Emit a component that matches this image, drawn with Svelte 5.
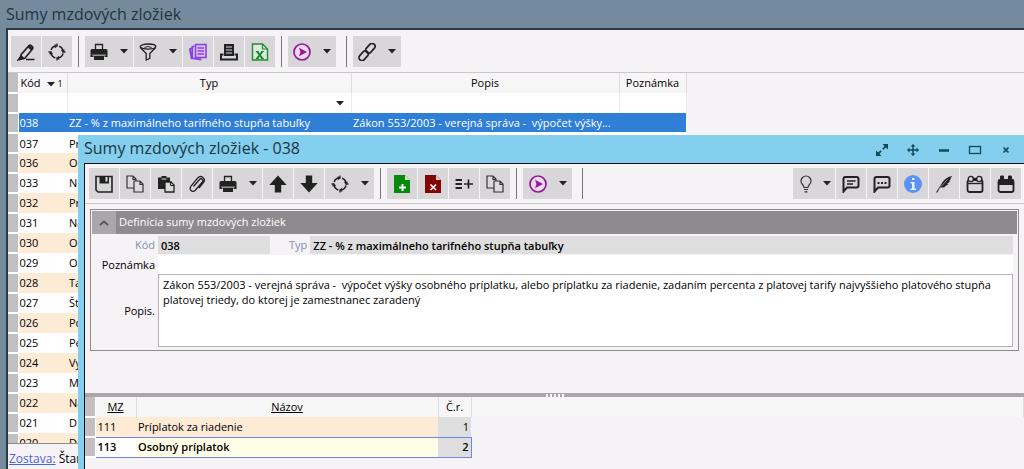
<script>
  const icons = {
    pencil: `<path d="M3 16.5 4.2 11.5 12 2.6q1-1 2.2 0l1.3 1.2q1 1 0 2.1L7.8 15.2Z" fill="none" stroke="#222" stroke-width="1.6"/><path d="M3 16.5 4 12l3.6 3.2ZM10.5 4.2l3.8 3.4 1.7-2-3.6-3.6Z" fill="#222"/><path d="M1 17 4 13l2 2ZM9 16.5h8.5" fill="#222" stroke="#222" stroke-width="1.3"/>`,
    target: `<circle cx="9" cy="9" r="6.2" fill="none" stroke="#222" stroke-width="1.500" stroke-dasharray="6.700 3.040" stroke-dashoffset="-1.500"/><path d="M9 .5v3M9 14.500v3M.5 9h3M14.500 9h3" stroke="#222" stroke-width="1.300"/><path d="m6.800 1 3 2-3 2.200ZM11.200 17l-3-2 3-2.200ZM17 6.800l-2 3-2.200-3ZM1 11.200l2-3 2.200 3Z" fill="#222"/>`,
    printer: `<path d="M5.5 6V1.5h7V6" fill="none" stroke="#222" stroke-width="1.3"/><path d="M2 6h14q1.500 0 1.500 1.500V14h-3v-2h-11v2H0.500V7.500Q0.500 6 2 6Z" fill="#222"/><path d="M4 12.500h10v4.500H4Z" fill="#222"/><path d="M2 12h14" stroke="#bbb" stroke-width=".8"/>`,
    filter: `<ellipse cx="9" cy="3.600" rx="7.800" ry="2.600" fill="none" stroke="#222" stroke-width="1.300"/><path d="M1.300 4.500 7.200 10.500v6.500l3.600-1.600v-4.900l5.900-6" fill="none" stroke="#222" stroke-width="1.300"/><path d="M5.500 4.500q3.500-2 7 0" fill="none" stroke="#222"/>`,
    cards: `<path d="M6.500 1.500h10.500v13H6.500Z" fill="#d9bff8" stroke="#8a3fe0" stroke-width="1.600"/><path d="M8.500 5h6.500M8.500 8h6.500M8.500 11h6.500" stroke="#8a3fe0" stroke-width="1.700"/><path d="M5.500 3 3.300 3.800v11.500l9 1.200M3 5 .8 6l1.900 10" fill="none" stroke="#8a3fe0" stroke-width="1.800"/>`,
    tray: `<path d="M4 1h10v12H4Z" fill="#222"/><path d="M6 4h6M6 7h6M6 10h6" stroke="#d8d6d9" stroke-width="1.200"/><path d="M3.500 11.500H1v5h16v-5h-2.500" fill="none" stroke="#222" stroke-width="2"/>`,
    excel: `<path d="M1.500 1h10l5 5v11h-15Z" fill="#dfe8df" stroke="#1c8f2c" stroke-width="1.400"/><path d="M11.500 1v5h5" fill="none" stroke="#1c8f2c" stroke-width="1.200"/><path d="m6 8.500 5.500 7M11.500 8.500 6 15.500" stroke="#128a22" stroke-width="2"/><path d="M4.800 8.500h3M10 8.500h2.800M4.800 15.500h3M10 15.500h2.800" stroke="#128a22"/>`,
    play: `<circle cx="9" cy="9" r="8" fill="#ecd9ef" stroke="#911a96" stroke-width="1.700"/><path d="m6 4.800 8 4.200-8 4.200 1.500-4.200Z" fill="#911a96"/>`,
    link: `<g transform="rotate(-48 9 9)" fill="none" stroke="#222" stroke-width="1.700"><rect x="-1.500" y="6" width="11" height="6" rx="3"/><rect x="8.500" y="6" width="11" height="6" rx="3"/></g>`,
    save: `<path d="M1 1.500h16v15.500H3L1 15Z" fill="none" stroke="#222" stroke-width="1.600"/><path d="M4.500 1h9.500v7.500H4.500Z" fill="#222"/><path d="M10.500 2h2v4.500h-2Z" fill="#ddd"/>`,
    copy: `<path d="M1 1h6l3 3v9H1ZM7 1v3.500h3" fill="#dcdadd" stroke="#333" stroke-width="1.200"/><path d="M8 6h6l3 3v8H8ZM14 6v3.500h3" fill="#dcdadd" stroke="#333" stroke-width="1.200"/>`,
    paste: `<path d="M1 2.500h3.500V1h5v1.500H13V14H1Z" fill="#222"/><path d="M4.500 4h5" stroke="#ddd"/><path d="M8 7h6l3 3v7H8Z" fill="#dcdadd" stroke="#222" stroke-width="1.300"/><path d="M13.500 7v3.500H17" fill="none" stroke="#222"/>`,
    clip: `<path d="m5.500 11.500 6-7q1.400-1.400 2.700-.2t.2 2.700l-7.300 8.500q-1.800 1.700-3.800.2t-.6-4L9.500 3.200q2.600-3 5.400-.8t.5 5.300L11 13" fill="none" stroke="#222" stroke-width="1.300"/>`,
    up: `<path d="M9 .5 17.700 10H12.200v7.500H5.800V10H.3Z" fill="#222"/>`,
    down: `<path d="M9 17.500 17.700 8H12.200V.5H5.800V8H.3Z" fill="#222"/>`,
    add: `<path d="M1 0h11l5 5v13H1Z" fill="#068a0c"/><path d="M12 0v5h5" fill="#cfe8cf"/><path d="M9.500 9v7M6 12.500h7" stroke="#fff" stroke-width="2"/>`,
    remove: `<path d="M1 0h11l5 5v13H1Z" fill="#850505"/><path d="M12 0v5h5" fill="#e6caca"/><path d="m6.500 9.500 5.500 5.500M12 9.500 6.500 15" stroke="#fff" stroke-width="1.700"/>`,
    listadd: `<path d="M.5 5h6.500M.5 9h6.500M.5 13h6.500" stroke="#222" stroke-width="2"/><path d="M13.500 4.500v9M9 9h9" stroke="#222" stroke-width="1.700"/>`,
    bulb: `<path d="M7 12.500Q7 11 5.500 9.500 4 8 4 6a5 5 0 0 1 10 0q0 2-1.500 3.500T11 12.500ZM7 14.500h4M7.500 16.800h3" fill="none" stroke="#333" stroke-width="1.200"/>`,
    note: `<path d="M1.500 16.500V4q0-2 2-2h11q2 0 2 2v6.500q0 2-2 2H5Z" fill="none" stroke="#222" stroke-width="2"/><path d="M5 6h8.500M5 9h6" stroke="#222" stroke-width="1.300"/>`,
    dots: `<path d="M1.500 16.500V4q0-2 2-2h11q2 0 2 2v6.500q0 2-2 2H5Z" fill="none" stroke="#222" stroke-width="2"/><path d="M4.500 8h2M8 8h2M11.500 8h2" stroke="#222" stroke-width="2"/>`,
    info: `<circle cx="9" cy="9" r="9" fill="#5b93f5"/><path d="M8 3h2.500v2H8ZM6.500 7h4v6.500H12V15H6.500v-1.500H8V8.500H6.500Z" fill="#e8f0ff"/>`,
    feather: `<path d="M1 17.500 6 9.500Q9 3 17.500.8L15 3.500l1.500-.2-2.500 3 1.500-.2-3.500 3 1.500.1-4 2.300 1.200.2q-3 1.200-5.700.8L2.300 17.500Z" fill="#222"/><path d="m5.500 12 7-7.500" stroke="#bbb" stroke-width=".7"/>`,
    calendar: `<rect x="1.500" y="5" width="15" height="12" rx="2" fill="none" stroke="#222" stroke-width="1.800"/><path d="M2 8.500h14" stroke="#222" stroke-width="1.400"/><circle cx="4.800" cy="4" r="2.600" fill="#dcdadd" stroke="#222" stroke-width="1.400"/><circle cx="13.200" cy="4" r="2.600" fill="#dcdadd" stroke="#222" stroke-width="1.400"/><path d="M7.500 3.500h3" stroke="#222" stroke-width="1.300"/>`,
    planner: `<rect x="1.500" y="5" width="15" height="12" rx="2" fill="none" stroke="#222" stroke-width="1.800"/><path d="M1 4.500h16V10H1ZM3 5V1.500q0-1 1.500-1h1.500q1 0 1 1V5M11 5V1.500q0-1 1-1h1.500q1.500 0 1.500 1V5" fill="#222"/>`,
    expand: `<path d="m3.500 14.500 11-11" stroke="#0f4a58" stroke-width="1.800" stroke-dasharray="6.500 2.500"/><path d="M9.500 3H15v5.500ZM3 9.500V15h5.500Z" fill="#0f4a58"/>`,
    move: `<path d="M9 4v10M4 9h10" stroke="#0f4a58" stroke-width="1.500"/><path d="m9 3 2.500 2.500h-5ZM9 15l2.500-2.500h-5ZM3 9l2.500-2.500v5ZM15 9l-2.500-2.500v5Z" fill="#0f4a58"/>`,
    minimize: `<path d="M4 9.500h10" stroke="#0f4a58" stroke-width="2.500"/>`,
    maximize: `<rect x="3.500" y="5.500" width="11" height="7" fill="none" stroke="#0f4a58" stroke-width="1.300"/>`,
    close: `<path d="m6.500 6.500 5 5M11.500 6.500l-5 5" stroke="#0f4a58" stroke-width="1.700"/>`
  };

  const mainTools = [
    { icon: "pencil", label: "Upraviť" },
    { icon: "target", label: "Obnoviť" },
    { sep: true },
    { icon: "printer", label: "Tlač", menu: true },
    { icon: "filter", label: "Filter", menu: true },
    { icon: "cards", label: "Zostavy" },
    { icon: "tray", label: "Export" },
    { icon: "excel", label: "Excel" },
    { sep: true },
    { icon: "play", label: "Spustiť", menu: true },
    { sep: true, wide: true },
    { icon: "link", label: "Odkazy", menu: true }
  ];

  const detailTools = [
    { icon: "save", label: "Uložiť" },
    { icon: "copy", label: "Kopírovať" },
    { icon: "paste", label: "Vložiť" },
    { icon: "clip", label: "Prílohy" },
    { icon: "printer", label: "Tlač", menu: true },
    { icon: "up", label: "Predchádzajúci" },
    { icon: "down", label: "Nasledujúci" },
    { icon: "target", label: "Obnoviť", menu: true },
    { sep: true },
    { icon: "add", label: "Pridať riadok" },
    { icon: "remove", label: "Zmazať riadok" },
    { icon: "listadd", label: "Pridať viac" },
    { icon: "copy", label: "Kopírovať riadok" },
    { sep: true },
    { icon: "play", label: "Spustiť", menu: true },
    { sep: true, wide: true }
  ];

  const sideTools = [
    { icon: "bulb", label: "Tipy", menu: true, narrow: true },
    { icon: "note", label: "Poznámka" },
    { icon: "dots", label: "Komentáre" },
    { icon: "info", label: "Informácie" },
    { icon: "feather", label: "Podpis" },
    { icon: "calendar", label: "Kalendár" },
    { icon: "planner", label: "Plánovač" }
  ];

  const windowTools = [
    { icon: "expand", label: "Zväčšiť" },
    { icon: "move", label: "Presunúť" },
    { icon: "minimize", label: "Minimalizovať" },
    { icon: "maximize", label: "Maximalizovať" },
    { icon: "close", label: "Zavrieť" }
  ];

  const rows = [
    ["038", "ZZ - % z maximálneho tarifného stupňa tabuľky", "Zákon 553/2003 - verejná správa -  výpočet výšky..."],
    ["037", "Pr"],
    ["036", "O"],
    ["033", "N"],
    ["032", "Pr"],
    ["031", "Na"],
    ["030", "O"],
    ["029", "O"],
    ["028", "Ta"],
    ["027", "Št"],
    ["026", "Po"],
    ["025", "Pe"],
    ["024", "Vy"],
    ["023", "M"],
    ["022", "Na"],
    ["021", "D"],
    ["020", "D"]
  ];

  let selected = $state("038");
  let note = $state("");
  let description = $state(
    "Zákon 553/2003 - verejná správa -  výpočet výšky osobného príplatku, alebo príplatku za riadenie, zadaním percenta z platovej tarify najvyššieho platového stupňa platovej triedy, do ktorej je zamestnanec zaradený"
  );
</script>

{#snippet icon(name)}
  <svg width="18" height="18" viewBox="0 0 18 18" aria-hidden="true">{@html icons[name]}</svg>
{/snippet}

{#snippet caret()}
  <svg class="caret" width="8" height="5" viewBox="0 0 8 5" aria-hidden="true"><path d="M0 0h8L4 4.500Z" fill="#222" /></svg>
{/snippet}

{#snippet toolbar(items)}
  {#each items as item}
    {#if item.sep}
      <span class="sep" class:wide={item.wide}></span>
    {:else}
      <button class="tool" class:menu={item.menu} class:narrow={item.narrow} aria-label={item.label}>
        {@render icon(item.icon)}
        {#if item.menu}{@render caret()}{/if}
      </button>
    {/if}
  {/each}
{/snippet}

<main class="desktop">
  <h1 class="title">Sumy mzdových zložiek</h1>

  <section class="list">
    <div class="toolbar">{@render toolbar(mainTools)}</div>

    <div class="scroll">
      <table class="grid">
        <colgroup>
          <col class="handle-col" /><col class="code-col" /><col class="type-col" /><col class="desc-col" /><col class="note-col" />
        </colgroup>
        <thead>
          <tr>
            <td class="handle"></td>
            <th class="sorted">Kód <span>{@render caret()}<sup>1</sup></span></th>
            <th>Typ</th>
            <th>Popis</th>
            <th>Poznámka</th>
          </tr>
          <tr class="filters">
            <td class="handle"></td>
            <td><input aria-label="Filter kód" /></td>
            <td>
              <div class="pick">
                <select aria-label="Filter typ"><option></option></select>
                {@render caret()}
              </div>
            </td>
            <td><input aria-label="Filter popis" /></td>
            <td><input aria-label="Filter poznámka" /></td>
          </tr>
        </thead>
        <tbody>
          {#each rows as [code, type, desc]}
            <tr class:selected={selected === code} onclick={() => (selected = code)}>
              <td class="handle"></td>
              <td>{code}</td>
              <td>{type}</td>
              <td>{desc}</td>
              <td></td>
            </tr>
          {/each}
        </tbody>
      </table>
    </div>

    <footer><a href="#zostava">Zostava:</a> Štan</footer>
  </section>

  <section class="window">
    <header class="caption">
      <h2 class="title">Sumy mzdových zložiek - 038</h2>
      <div class="controls">
        {#each windowTools as tool}
          <button aria-label={tool.label}>{@render icon(tool.icon)}</button>
        {/each}
      </div>
    </header>

    <div class="body">
      <div class="toolbar">
        {@render toolbar(detailTools)}
        <span class="spacer"></span>
        {@render toolbar(sideTools)}
      </div>

      <div class="panel">
        <div class="panel-head">
          <button aria-label="Zbaliť">
            <svg width="10" height="6" viewBox="0 0 10 6" aria-hidden="true"><path d="m1 5 4-3.500L9 5" fill="none" stroke="#555" stroke-width="1.800" /></svg>
          </button>
          <h3>Definícia sumy mzdových zložiek</h3>
        </div>
        <div class="form">
          <label class="dim" for="kod">Kód</label>
          <div class="line">
            <input class="fixed code" id="kod" value="038" readonly />
            <label class="dim" for="typ">Typ</label>
            <input class="fixed" id="typ" value="ZZ - % z maximálneho tarifného stupňa tabuľky" readonly />
          </div>
          <label for="poznamka">Poznámka</label>
          <input id="poznamka" bind:value={note} />
          <label for="popis">Popis.</label>
          <textarea id="popis" spellcheck="false" bind:value={description}></textarea>
        </div>
      </div>

      <div class="splitter"><i></i><i></i><i></i><i></i><i></i></div>

      <div class="items">
        <table>
          <colgroup>
            <col class="handle-col" /><col class="mz-col" /><col class="name-col" /><col class="order-col" /><col />
          </colgroup>
          <thead>
            <tr>
              <td class="handle"></td>
              <th><u>MZ</u></th>
              <th><u>Názov</u></th>
              <th>Č.r.</th>
              <th></th>
            </tr>
          </thead>
          <tbody>
            <tr>
              <td class="handle"></td>
              <td>111</td>
              <td>Príplatok za riadenie</td>
              <td class="num">1</td>
            </tr>
            <tr class="current">
              <td class="handle"></td>
              <td>113</td>
              <td>Osobný príplatok</td>
              <td class="num">2</td>
            </tr>
          </tbody>
        </table>
      </div>
    </div>
  </section>
</main>

<style>
  :global(body) {
    margin: 0;
  }

  * {
    box-sizing: border-box;
  }

  .desktop {
    position: relative;
    display: flex;
    flex-direction: column;
    height: 100vh;
    overflow: hidden;
    padding-left: 6px;
    background: #748b9e;
    color: #000;
    font-family: "Open Sans", "Noto Sans", sans-serif;
    font-size: 11px;
    line-height: 16px;
  }

  button,
  input,
  select,
  textarea {
    margin: 0;
    padding: 0;
    border: 0;
    border-radius: 0;
    outline: 0;
    background: none;
    color: inherit;
    font: inherit;
  }

  svg {
    display: block;
    flex: none;
  }

  .title {
    margin: 0;
    color: #1d3541;
    font-size: 16px;
    font-weight: 500;
    line-height: 28px;
    white-space: nowrap;
  }

  .list {
    display: flex;
    flex: 1;
    flex-direction: column;
    min-height: 0;
    border-top: 2px solid #2c3a48;
    border-left: 2px solid #2c3a48;
    background: #f6f3f7;
  }

  .toolbar {
    display: flex;
    flex: none;
    gap: 1px;
    padding: 6px 3px 5px;
    border-bottom: 1px solid #cbc8cc;
  }

  .tool {
    display: flex;
    align-items: center;
    justify-content: center;
    width: 30px;
    height: 31px;
    background: #d8d6d9;
  }

  .menu {
    gap: 12px;
    width: 48px;
  }

  .narrow {
    gap: 8px;
    width: 42px;
  }

  .body .menu:not(.narrow) {
    width: 49px;
  }

  .sep {
    width: 1px;
    margin: 0 5px;
    background: #777;
  }

  .wide {
    margin-left: 9px;
  }

  .spacer {
    flex: 1;
  }

  .scroll {
    flex: 1;
    min-height: 0;
    overflow: hidden;
  }

  table {
    border-collapse: collapse;
    table-layout: fixed;
  }

  th,
  td {
    overflow: hidden;
    height: 20px;
    padding: 0 2px;
    font-weight: 400;
    line-height: 18px;
    white-space: pre;
  }

  th {
    border-right: 1px solid #dddbde;
    background: #f6f6f6;
  }

  .grid {
    width: 678px;
  }

  .handle-col {
    width: 10px;
  }

  .code-col {
    width: 49px;
  }

  .type-col {
    width: 284px;
  }

  .desc-col {
    width: 268px;
  }

  .note-col {
    width: 67px;
  }

  .grid td:nth-child(2) {
    padding-left: 1px;
  }

  .handle {
    padding: 0;
    border-right: 1px solid #fff;
    border-bottom: 2px solid #fff;
    background: #c1bfc2;
  }

  .sorted {
    text-align: left;
  }

  .sorted span {
    display: inline-flex;
    align-items: center;
    gap: 2px;
    margin-left: 4px;
    vertical-align: middle;
  }

  sup {
    font-size: 9px;
    line-height: 12px;
  }

  .filters td:not(.handle) {
    border-right: 1px solid #eceaed;
    background: #fff;
  }

  .filters input,
  .pick select {
    display: block;
    width: 100%;
    height: 18px;
  }

  .pick {
    display: flex;
    align-items: center;
    padding-right: 5px;
  }

  .pick select {
    appearance: none;
  }

  .grid tbody td:not(.handle) {
    background: #fff;
  }

  .grid tbody tr:nth-child(odd) td:not(.handle) {
    background: #fdebd5;
  }

  .grid tbody tr.selected td:not(.handle) {
    border-bottom: 2px solid #fff;
    background: #2f7fd6;
    color: #fff;
  }

  footer {
    flex: none;
    height: 26px;
    padding: 7px 1px 0;
    border-top: 1px solid #8d8b8e;
    font-size: 12px;
    white-space: nowrap;
  }

  footer a {
    color: #4a63d8;
  }

  .window {
    position: absolute;
    top: 135px;
    right: 0;
    bottom: 0;
    left: 78px;
    display: flex;
    flex-direction: column;
    padding-left: 6px;
    background: #84ceee;
  }

  .caption {
    display: flex;
    flex: none;
    justify-content: space-between;
  }

  .caption .title {
    line-height: 26px;
    padding-bottom: 2px;
  }

  .controls {
    display: flex;
    align-items: center;
    padding: 2px 3px 0 0;
  }

  .controls button {
    display: flex;
    justify-content: center;
    width: 31px;
  }

  .body {
    display: flex;
    flex: 1;
    flex-direction: column;
    min-height: 0;
    border-top: 1px solid #111;
    border-left: 1px solid #111;
    background: #f6f3f7;
  }

  .body .toolbar {
    padding: 4px 3px 4px 4px;
  }

  .panel {
    flex: none;
    margin: 5px 5px 0;
    padding: 1px;
    border: 1px solid #8d8b8e;
  }

  .panel-head {
    display: flex;
    background: #8d8b8e;
    color: #fff;
  }

  .panel-head button {
    display: flex;
    align-items: center;
    justify-content: center;
    width: 24px;
    height: 23px;
    background: #a9a7aa;
  }

  .panel-head h3 {
    margin: 0 3px;
    font-size: 11px;
    font-weight: 400;
    line-height: 22px;
  }

  .form {
    display: grid;
    grid-template-columns: 63px 1fr;
    column-gap: 3px;
    align-items: center;
    padding: 1px 4px 2px 0;
  }

  .form > label {
    text-align: right;
  }

  .dim {
    color: #8590a8;
  }

  .line {
    display: flex;
    align-items: center;
    height: 20px;
  }

  .line label {
    margin: 0 3px 0 19px;
  }

  .fixed {
    flex: 1;
    height: 18px;
    padding: 0 3px;
    background: #dedede;
    font-weight: 600;
  }

  .code {
    flex: none;
    width: 112px;
  }

  #poznamka {
    height: 19px;
    background: #fff;
  }

  textarea {
    display: block;
    height: 73px;
    padding: 2px 4px;
    border: 1px solid #b5b3b6;
    background: #fff;
    line-height: 15px;
    resize: none;
  }

  .splitter {
    display: flex;
    flex: none;
    align-items: center;
    justify-content: center;
    gap: 2px;
    height: 4px;
    margin-top: 42px;
    background: #a9a7aa;
  }

  .splitter i {
    width: 2px;
    height: 3px;
    background: #fff;
  }

  .items {
    overflow: hidden;
  }

  .items table {
    width: 100%;
  }

  .mz-col {
    width: 41px;
  }

  .name-col {
    width: 302px;
  }

  .order-col {
    width: 33px;
  }

  .items tbody td:not(.handle) {
    background: #fdebd5;
  }

  .items tbody .current td:not(.handle) {
    border-top: 1px solid #6f86e6;
    border-bottom: 1px solid #6f86e6;
    background: #ffffe8;
    font-weight: 600;
  }

  .items tbody .current td:nth-child(2):not(.handle) {
    background: #fff;
  }

  .items tbody tr td.num:not(.handle) {
    background: #dedede;
    text-align: right;
  }

  .items .current .num {
    border-right: 1px solid #6f86e6;
  }
</style>
